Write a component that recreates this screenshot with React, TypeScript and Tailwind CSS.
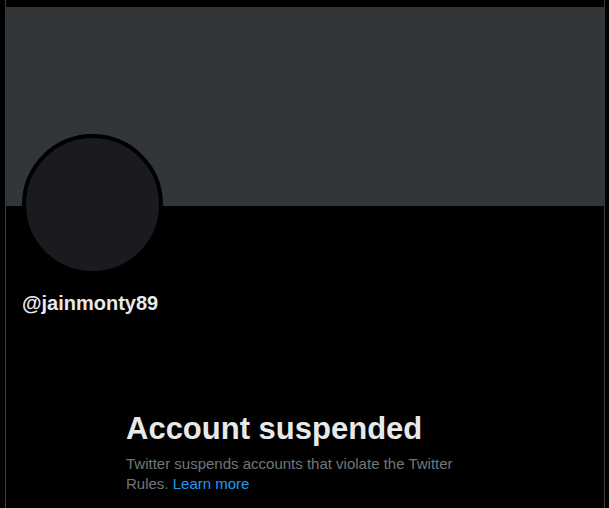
export default function App() {
  return (
    <div className="min-h-[508px] w-[609px] bg-black font-['Liberation_Sans',Arial,sans-serif]">
      <div className="ml-[5px] w-[600px] min-h-[508px] border-x border-[#3a3d40] pt-[7px]">
        {/* banner */}
        <div className="-mx-px h-[199px] bg-[#333639]" />

        {/* avatar + handle */}
        <div className="px-4">
          <div className="-mt-[72px] h-[141px] w-[141px] rounded-full border-4 border-black bg-[#1a1b1e]" />
          <div className="mt-4 text-[20px] font-bold leading-6 text-[#e7e9ea]">@jainmonty89</div>
        </div>

        {/* suspended notice */}
        <div className="ml-[120px] mt-[96px] w-[340px]">
          <h2 className="text-[31px] font-bold leading-9 text-[#e7e9ea]">Account suspended</h2>
          <p className="mt-[7px] text-[15px] leading-5 text-[#71767b]">
            Twitter suspends accounts that violate the Twitter Rules.{' '}
            <span className="text-[#1d9bf0]">Learn more</span>
          </p>
        </div>
      </div>
    </div>
  );
}
